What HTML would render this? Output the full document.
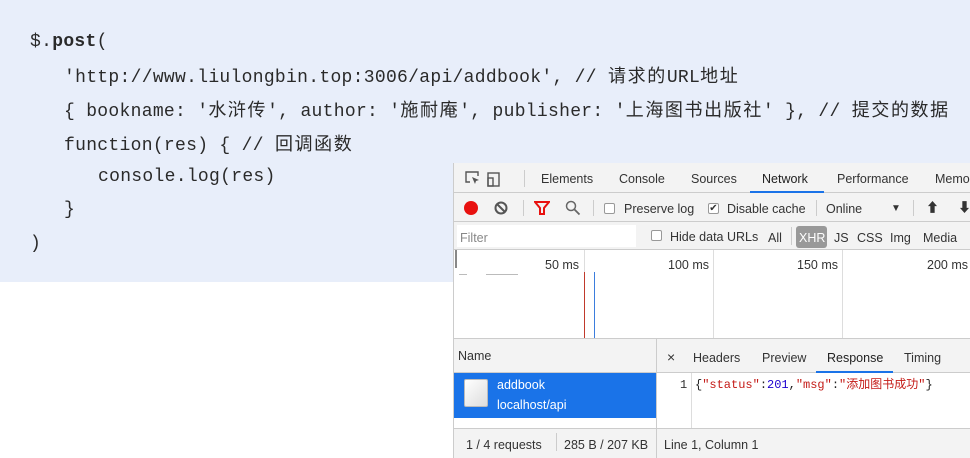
<!DOCTYPE html>
<html><head><meta charset="utf-8"><style>
*{margin:0;padding:0;box-sizing:border-box}
body{width:970px;height:458px;background:#fff;position:relative;overflow:hidden;font-family:"Liberation Sans","Noto Sans CJK SC",sans-serif}
.code{position:absolute;left:0;top:0;width:970px;height:282px;background:#e8eefa}
.ln{position:absolute;font-family:"Liberation Mono","Noto Sans CJK SC",monospace;font-size:18px;letter-spacing:0.3px;color:#2a2a2a;white-space:pre;line-height:20px}
.ln b{font-weight:bold}
.cj{font-family:"Noto Sans CJK SC",sans-serif;font-size:18px;letter-spacing:1.6px}
.dt{position:absolute;left:453px;top:163px;width:517px;height:295px;background:#fff;font-size:12.5px;color:#333;border-left:1px solid #ccc}
.a{position:absolute;white-space:nowrap;line-height:14px}
.bar{position:absolute;left:0;width:517px;background:#f3f3f3;border-bottom:1px solid #ccc}
.sep{position:absolute;width:1px;background:#ccc}
.cb{position:absolute;width:11px;height:11px;border:1px solid #999;border-radius:2px;background:#fff}
.vl{position:absolute;width:1px;background:#ddd;top:87px;height:88px}
</style></head><body>
<div class="code"></div>
<div class="ln" style="left:30px;top:32px">$.<b>post</b>(</div>
<div class="ln" style="left:64px;top:65px">'http://www.liulongbin.top:3006/api/addbook', // <span class="cj">请求的</span>URL<span class="cj">地址</span></div>
<div class="ln" style="left:64px;top:99px">{ bookname: '<span class="cj">水浒传</span>', author: '<span class="cj">施耐庵</span>', publisher: '<span class="cj">上海图书出版社</span>' }, // <span class="cj">提交的数据</span></div>
<div class="ln" style="left:64px;top:133px">function(res) { // <span class="cj">回调函数</span></div>
<div class="ln" style="left:98px;top:167px">console.log(res)</div>
<div class="ln" style="left:64px;top:200px">}</div>
<div class="ln" style="left:30px;top:234px">)</div>

<div class="dt">
 <div class="bar" style="top:0;height:30px"></div>
 <svg class="a" style="left:10px;top:7px" width="40" height="18"><path d="M6 12H2V2h12v4" fill="none" stroke="#555" stroke-width="1.4"/><path d="M8 7l7 3-3 1-1 3z" fill="#555"/><rect x="24" y="3" width="11" height="13" fill="none" stroke="#555" stroke-width="1.4"/><rect x="24" y="8" width="5" height="8" fill="none" stroke="#555" stroke-width="1.4"/></svg>
 <div class="sep" style="left:70px;top:7px;height:17px"></div>
 <div class="a" style="left:87px;top:9px">Elements</div>
 <div class="a" style="left:165px;top:9px">Console</div>
 <div class="a" style="left:237px;top:9px">Sources</div>
 <div class="a" style="left:308px;top:9px;color:#222">Network</div>
 <div style="position:absolute;left:296px;top:28px;width:74px;height:2px;background:#1a73e8"></div>
 <div class="a" style="left:383px;top:9px">Performance</div>
 <div class="a" style="left:481px;top:9px">Memo</div>

 <div class="bar" style="top:30px;height:29px"></div>
 <div style="position:absolute;left:10px;top:38px;width:14px;height:14px;border-radius:50%;background:#e8110f"></div>
 <svg class="a" style="left:40px;top:38px" width="14" height="14"><circle cx="7" cy="7" r="5.5" fill="none" stroke="#555" stroke-width="2"/><path d="M3 3l8 8" stroke="#555" stroke-width="2"/></svg>
 <div class="sep" style="left:69px;top:37px;height:16px"></div>
 <svg class="a" style="left:80px;top:38px" width="16" height="14"><path d="M1 1h14l-5 6v6H6V7z" fill="none" stroke="#e8110f" stroke-width="2"/></svg>
 <svg class="a" style="left:111px;top:37px" width="16" height="16"><circle cx="6" cy="6" r="4.5" fill="none" stroke="#666" stroke-width="1.5"/><path d="M9.5 9.5l5 5" stroke="#666" stroke-width="1.8"/></svg>
 <div class="sep" style="left:139px;top:37px;height:16px"></div>
 <div class="cb" style="left:150px;top:40px"></div>
 <div class="a" style="left:170px;top:39px">Preserve log</div>
 <div class="cb" style="left:254px;top:40px;font-size:10px;line-height:9px;text-align:center">✔</div>
 <div class="a" style="left:273px;top:39px">Disable cache</div>
 <div class="sep" style="left:362px;top:37px;height:16px"></div>
 <div class="a" style="left:372px;top:39px">Online</div>
 <div class="a" style="left:437px;top:39px;font-size:10px">▼</div>
 <div class="sep" style="left:459px;top:37px;height:16px"></div>
 <div class="a" style="left:472px;top:38px;font-size:13px">⬆</div>
 <div class="a" style="left:504px;top:38px;font-size:13px">⬇</div>

 <div class="bar" style="top:59px;height:28px"></div>
 <div style="position:absolute;left:3px;top:62px;width:179px;height:22px;background:#fff"></div>
 <div class="a" style="left:6px;top:68px;color:#888">Filter</div>
 <div class="cb" style="left:197px;top:67px"></div>
 <div class="a" style="left:216px;top:67px">Hide data URLs</div>
 <div class="a" style="left:314px;top:68px">All</div>
 <div class="sep" style="left:337px;top:64px;height:18px"></div>
 <div style="position:absolute;left:342px;top:63px;width:31px;height:22px;background:#999;border-radius:3px"></div>
 <div class="a" style="left:345px;top:68px;color:#fff">XHR</div>
 <div class="a" style="left:380px;top:68px">JS</div>
 <div class="a" style="left:403px;top:68px">CSS</div>
 <div class="a" style="left:436px;top:68px">Img</div>
 <div class="a" style="left:469px;top:68px">Media</div>

 <div class="vl" style="left:130px"></div><div class="vl" style="left:259px"></div><div class="vl" style="left:388px"></div>
 <div class="a" style="left:91px;top:95px">50 ms</div>
 <div class="a" style="left:214px;top:95px">100 ms</div>
 <div class="a" style="left:343px;top:95px">150 ms</div>
 <div class="a" style="left:473px;top:95px">200 ms</div>
 <div style="position:absolute;left:1px;top:87px;width:2px;height:18px;background:#888"></div>
 <div style="position:absolute;left:5px;top:111px;width:8px;height:1px;background:#bbb"></div>
 <div style="position:absolute;left:32px;top:111px;width:32px;height:1px;background:#bbb"></div>
 <div style="position:absolute;left:130px;top:109px;width:1px;height:66px;background:#c0392b"></div>
 <div style="position:absolute;left:140px;top:109px;width:1px;height:66px;background:#3b7ddd"></div>

 <div class="bar" style="top:175px;height:35px;border-top:1px solid #ccc"></div>
 <div class="sep" style="left:202px;top:175px;height:120px"></div>
 <div class="a" style="left:4px;top:186px">Name</div>
 <div class="a" style="left:213px;top:187px;font-size:14px">×</div>
 <div class="a" style="left:239px;top:188px">Headers</div>
 <div class="a" style="left:308px;top:188px">Preview</div>
 <div class="a" style="left:373px;top:188px;color:#222">Response</div>
 <div style="position:absolute;left:362px;top:208px;width:77px;height:2px;background:#1a73e8"></div>
 <div class="a" style="left:450px;top:188px">Timing</div>

 <div style="position:absolute;left:0;top:210px;width:202px;height:45px;background:#1a73e8"></div>
 <div style="position:absolute;left:10px;top:216px;width:24px;height:28px;background:linear-gradient(135deg,#fff,#ddd);border:1px solid #bbb;border-radius:2px"></div>
 <div class="a" style="left:43px;top:215px;color:#fff">addbook</div>
 <div class="a" style="left:43px;top:235px;color:#fff">localhost/api</div>
 <div class="sep" style="left:237px;top:210px;height:56px;background:#ddd"></div>
 <div class="a" style="left:226px;top:215px;font-family:'Liberation Mono',monospace;font-size:12px;color:#333">1</div>
 <div class="a" style="left:241px;top:215px;font-family:'Liberation Mono','Noto Sans CJK SC',monospace;font-size:12px;color:#222">{<span style="color:#c41a16">"status"</span>:<span style="color:#1c00cf">201</span>,<span style="color:#c41a16">"msg"</span>:<span style="color:#c41a16">"添加图书成功"</span>}</div>

 <div class="bar" style="top:265px;height:30px;border-top:1px solid #ccc;border-bottom:none"></div>
 <div class="sep" style="left:202px;top:266px;height:29px"></div>
 <div class="a" style="left:12px;top:275px">1 / 4 requests</div>
 <div class="sep" style="left:102px;top:270px;height:18px"></div>
 <div class="a" style="left:110px;top:275px">285 B / 207 KB</div>
 <div class="a" style="left:210px;top:275px">Line 1, Column 1</div>
</div>
</body></html>
